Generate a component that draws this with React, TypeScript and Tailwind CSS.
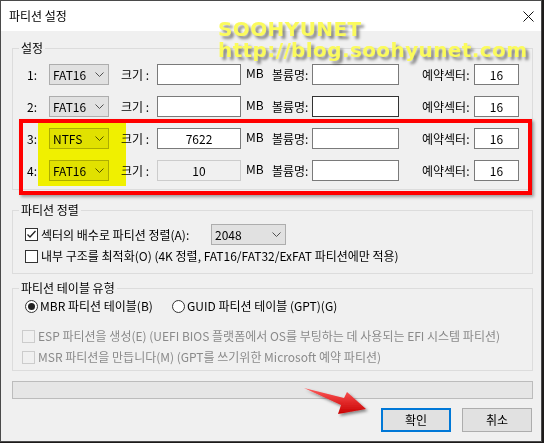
import React from 'react';

const Chevron = () => (
  <svg width="9" height="5" viewBox="0 0 9 5" className="shrink-0">
    <polyline points="0.5,0.5 4.5,4.5 8.5,0.5" fill="none" stroke="#505050" strokeWidth="1" />
  </svg>
);

function Combo({ value, w }: { value: string; w: string }) {
  return (
    <div className={`${w} h-[21px] bg-[#e1e1e1] border border-[#adadad] flex items-center justify-between pl-[3px] pr-[4px]`}>
      <span>{value}</span>
      <Chevron />
    </div>
  );
}

function TextBox({
  w,
  value,
  disabled,
  focus,
}: {
  w: string;
  value?: string;
  disabled?: boolean;
  focus?: boolean;
}) {
  const tone = disabled
    ? 'bg-[#f0f0f0] border-[#cccccc]'
    : focus
      ? 'bg-white border-[#333333]'
      : 'bg-white border-[#7a7a7a]';
  return (
    <div className={`${w} h-[21px] border ${tone} flex items-center justify-center`}>
      {value}
    </div>
  );
}

function CheckBox({ checked, disabled }: { checked?: boolean; disabled?: boolean }) {
  return (
    <div
      className={`w-[13px] h-[13px] border shrink-0 flex items-center justify-center ${
        disabled ? 'border-[#cccccc] bg-[#f0f0f0]' : 'border-[#333333] bg-white'
      }`}
    >
      {checked && (
        <svg width="11" height="11" viewBox="0 0 11 11">
          <polyline points="1.5,5.5 4,8 9.5,2" fill="none" stroke="#222" strokeWidth="1.3" />
        </svg>
      )}
    </div>
  );
}

function Radio({ checked }: { checked?: boolean }) {
  return (
    <div className="w-[13px] h-[13px] rounded-full border border-[#333333] bg-white shrink-0 flex items-center justify-center">
      {checked && <div className="w-[7px] h-[7px] rounded-full bg-[#222]" />}
    </div>
  );
}

function PartRow({
  n,
  fs,
  size,
  sizeDisabled,
  volFocus,
}: {
  n: number;
  fs: string;
  size?: string;
  sizeDisabled?: boolean;
  volFocus?: boolean;
}) {
  return (
    <div className="flex items-center h-[21px]">
      <span className="w-[22px]">{n}:</span>
      <Combo value={fs} w="w-[60px]" />
      <span className="ml-[12px] w-[36px]">크기 :</span>
      <TextBox w="w-[84px]" value={size} disabled={sizeDisabled} />
      <span className="ml-[5px] w-[26px] mb-[4px]">MB</span>
      <span className="w-[40px]">볼륨명:</span>
      <TextBox w="w-[87px]" focus={volFocus} />
      <span className="ml-[23px] w-[52px]">예약섹터:</span>
      <TextBox w="w-[45px]" value="16" />
    </div>
  );
}

function Group({ title, className, children }: { title: string; className?: string; children: React.ReactNode }) {
  return (
    <fieldset className={`ml-[11px] w-[521px] border border-[#dcdcdc] ${className ?? ''}`}>
      <legend className="ml-[6px] px-[2px] leading-[16px]">{title}</legend>
      {children}
    </fieldset>
  );
}

export default function App() {
  return (
    <div className="relative w-[544px] h-[443px] bg-[#1d1b1a] font-['Noto_Sans_CJK_KR',sans-serif] text-[12px] leading-[16px] text-black overflow-hidden">
      <div className="w-[542px] h-[442px] border border-[#4a4a4a] bg-[#f0f0f0] flex flex-col">
        {/* title bar */}
        <div className="h-[30px] bg-white flex items-center justify-between pl-[8px] pr-[8px] shrink-0">
          <span className="text-[12px]">파티션 설정</span>
          <svg width="11" height="11" viewBox="0 0 11 11" className="mr-[-1px]">
            <path d="M0.5 0.5 L10.5 10.5 M10.5 0.5 L0.5 10.5" stroke="#111" strokeWidth="1" />
          </svg>
        </div>

        <div className="pt-[9px] flex flex-col">
          <Group title="설정">
            <div className="pl-[14px] pt-[8px] pb-[8px] flex flex-col gap-[11px]">
              <PartRow n={1} fs="FAT16" />
              <PartRow n={2} fs="FAT16" volFocus />
              <PartRow n={3} fs="NTFS" size="7622" />
              <PartRow n={4} fs="FAT16" size="10" sizeDisabled />
            </div>
          </Group>

          <Group title="파티션 정렬" className="mt-[12px]">
            <div className="pl-[12px] pt-[6px] pb-[9px] flex flex-col gap-[3px]">
              <div className="flex items-center h-[21px]">
                <div className="w-[186px] flex items-center gap-[3px]">
                  <CheckBox checked />
                  <span>섹터의 배수로 파티션 정렬(A):</span>
                </div>
                <Combo value="2048" w="w-[75px]" />
              </div>
              <div className="flex items-center h-[16px] gap-[3px]">
                <CheckBox />
                <span>내부 구조를 최적화(O) (4K 정렬, FAT16/FAT32/ExFAT 파티션에만 적용)</span>
              </div>
            </div>
          </Group>

          <Group title="파티션 테이블 유형" className="mt-[6px]">
            <div className="pl-[12px] pt-[1px] pb-[5px] flex flex-col">
              <div className="flex items-center h-[18px]">
                <div className="w-[147px] flex items-center gap-[2px]">
                  <Radio checked />
                  <span>MBR 파티션 테이블(B)</span>
                </div>
                <div className="flex items-center gap-[2px]">
                  <Radio />
                  <span>GUID 파티션 테이블 (GPT)(G)</span>
                </div>
              </div>
              <div className="flex items-center h-[16px] gap-[3px] ml-[-3px] mt-[13px] text-[#8a8a8a]">
                <CheckBox disabled />
                <span>ESP 파티션을 생성(E) (UEFI BIOS 플랫폼에서 OS를 부팅하는 데 사용되는 EFI 시스템 파티션)</span>
              </div>
              <div className="flex items-center h-[16px] gap-[3px] ml-[-3px] mt-[5px] text-[#8a8a8a]">
                <CheckBox disabled />
                <span>MSR 파티션을 만듭니다(M) (GPT를 쓰기위한 Microsoft 예약 파티션)</span>
              </div>
            </div>
          </Group>

          <div className="ml-[11px] w-[521px] h-[18px] mt-[10px] border border-[#bcbcbc] bg-[#e6e6e6]" />

          <div className="mt-[9px] flex justify-end gap-[11px] pr-[9px]">
            <button className="w-[70px] h-[24px] border-2 border-[#0078d7] bg-[#e1e1e1] flex items-center justify-center">
              확인
            </button>
            <button className="w-[70px] h-[24px] border border-[#adadad] bg-[#e1e1e1] flex items-center justify-center">
              취소
            </button>
          </div>
        </div>
      </div>

      {/* annotations drawn over the screenshot */}
      <div className="absolute left-[38px] top-[123px] w-[88px] h-[63px] bg-[#ffff00] mix-blend-multiply" />
      <div className="absolute left-[19px] top-[119px] w-[513px] h-[76px] border-[4px] border-[#ff0000] shadow-[2px_2px_3px_rgba(0,0,0,0.35)]" />

      <div className="absolute left-[218px] top-[19px] font-['DejaVu_Sans',sans-serif] font-bold text-[20px] leading-[21px] text-[#fbfb5c] tracking-[0.4px] [text-shadow:3px_3px_3px_rgba(0,0,0,0.45)] whitespace-nowrap">
        <div>SOOHYUNET</div>
        <div>http://blog.soohyunet.com</div>
      </div>

      <svg className="absolute left-[296px] top-[380px]" width="80" height="40" viewBox="0 0 80 40">
        <defs>
          <linearGradient id="arrowFill" x1="0" y1="0" x2="0" y2="1">
            <stop offset="0" stopColor="#ff5a5a" />
            <stop offset="1" stopColor="#c80000" />
          </linearGradient>
          <filter id="arrowShadow" x="-20%" y="-20%" width="150%" height="160%">
            <feDropShadow dx="2" dy="2" stdDeviation="1.5" floodColor="#000" floodOpacity="0.45" />
          </filter>
        </defs>
        <polygon
          points="8,8 48,18 51,12 70,29 42,34 45,25"
          fill="url(#arrowFill)"
          filter="url(#arrowShadow)"
        />
      </svg>
    </div>
  );
}
